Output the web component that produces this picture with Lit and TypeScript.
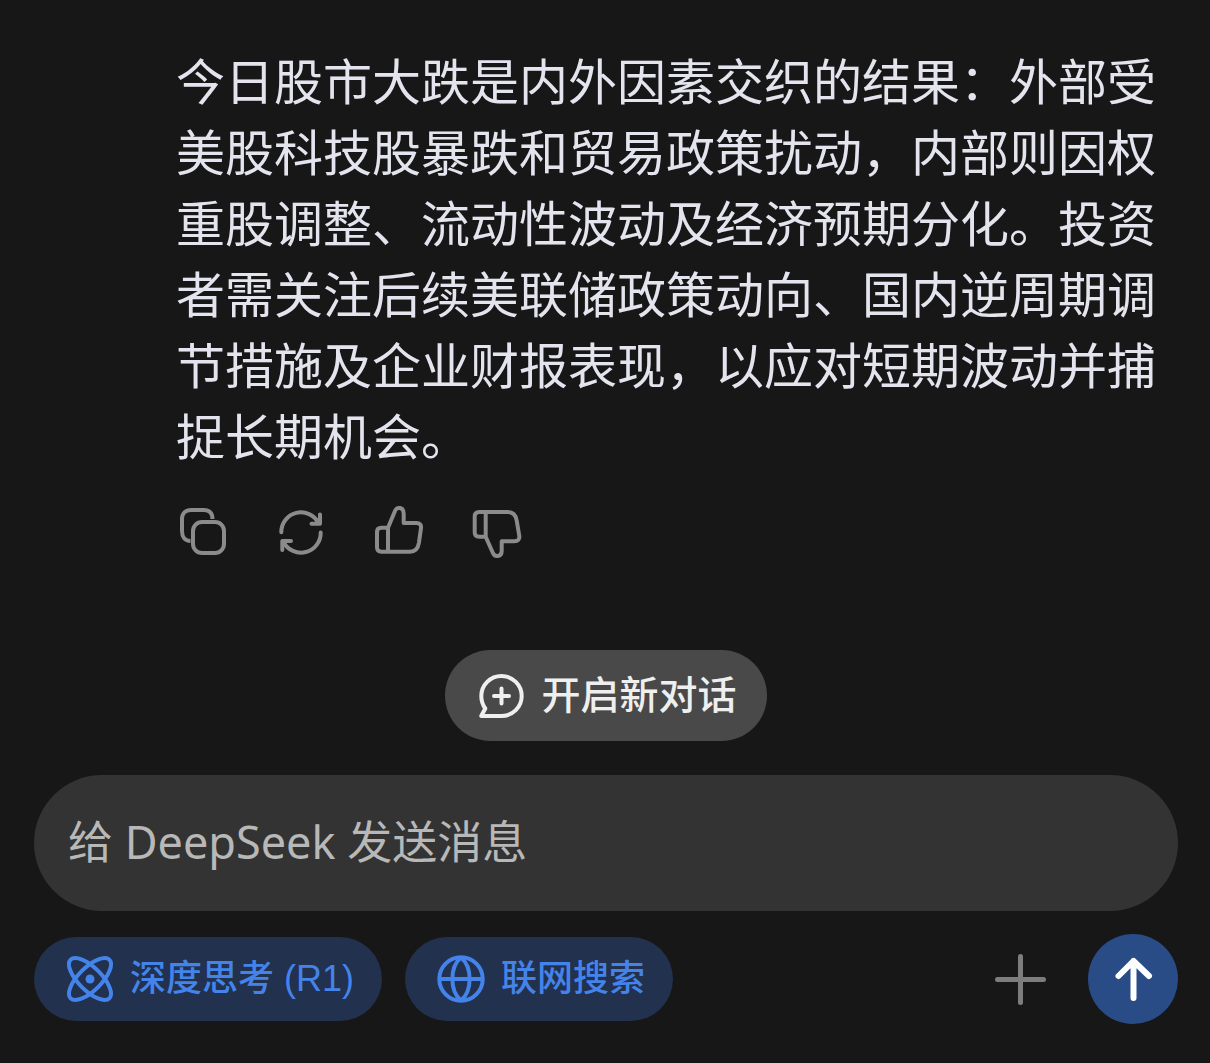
import { LitElement, html, css, svg } from "lit";
import { customElement, property, state } from "lit/decorators.js";

const icons = {
  copy: svg`<rect x="17" y="17" width="31" height="31" rx="9"/><path stroke-linecap="butt" d="M36.500 14C36.500 8 33 5 28 5H15C9.500 5 6 8.500 6 14v12c0 6 3 10 8.500 10"/>`,
  retry: svg`<path d="M7.300 27.300A19.700 19.700 0 0 1 44.500 18M46 9.500V18.700H37.500M46.700 27.500A19.700 19.700 0 0 1 9.500 37M8.300 45V36H17"/>`,
  like: svg`<path d="M16 22.700 23.200 5.500C25 1.500 31.700 2 31.700 8.500V18H44.500C47.800 18 49.400 20 49 23L46.900 38C46 43.500 43 46.700 38 46.700H9.500Q5 46.700 5 42V27Q5 22.700 9.500 22.700H16V46"/>`,
  dislike: svg`<path d="M15.700 31.700 22.900 48C24.700 52.500 31.700 52 31.700 46V36.300H44.500C47.800 36.300 49.700 34.500 49.300 31L46.700 15.500C45.700 10 43 7 38 7H9.200Q4.700 7 4.700 11.500V27.200Q4.700 31.700 9.200 31.700H15.700V8"/>`,
  chat: svg`<path d="M24.500 44H4.200L8.300 36.500C5.800 33 4.300 28.500 4.300 24A20.200 20 0 1 1 24.500 44Z"/><path d="M24.500 16.500V31.500M17 24H32"/>`,
  atom: svg`<g stroke-width="4"><ellipse cx="24" cy="24" rx="27.400" ry="11.500" transform="rotate(45 24 24)"/><ellipse cx="24" cy="24" rx="27.400" ry="11.500" transform="rotate(-45 24 24)"/></g><circle class="dot" cx="24" cy="24" r="4.500"/>`,
  globe: svg`<circle cx="24" cy="24" r="21.700"/><path d="M2.500 24H45.500M24 2.500C12.500 12 12.500 36 24 45.500M24 2.500C35.500 12 35.500 36 24 45.500"/>`,
};

@customElement("icon-button")
class IconButton extends LitElement {
  @property() label = "";
  @property() icon: keyof typeof icons = "copy";

  static styles = css`
    :host { display: block; }
    .action {
      display: block;
      padding: 0;
      border: 0;
      background: none;
      color: #8b8b8b;
      cursor: pointer;
    }
    .glyph {
      display: block;
      width: 54px;
      height: 54px;
      fill: none;
      stroke: currentColor;
      stroke-width: 4;
      stroke-linecap: round;
      stroke-linejoin: round;
    }
  `;

  render() {
    return html`<button class="action" type="button" aria-label=${this.label}>
      <svg class="glyph" viewBox="0 0 54 54" aria-hidden="true">${icons[this.icon]}</svg>
    </button>`;
  }
}

@customElement("toggle-chip")
class ToggleChip extends LitElement {
  @property() label = "";
  @property() icon: keyof typeof icons = "atom";
  @state() private on = true;

  static styles = css`
    :host { display: block; }
    .chip {
      display: flex;
      align-items: center;
      gap: 16px;
      height: 84px;
      padding: 0 28px 0 32px;
      border: 0;
      border-radius: 42px;
      background: #333333;
      color: #b8b8b8;
      font: 500 36px/48px "Liberation Sans", "Noto Sans CJK SC", sans-serif;
      white-space: nowrap;
      cursor: pointer;
    }
    .chip[aria-pressed="true"] {
      background: #21314e;
      color: #4484ea;
    }
    .glyph {
      width: 48px;
      height: 48px;
      fill: none;
      stroke: currentColor;
      stroke-width: 4;
      overflow: visible;
    }
    .dot { fill: currentColor; stroke: none; }
  `;

  render() {
    return html`<button class="chip" type="button" aria-pressed=${this.on ? "true" : "false"}
      @click=${() => (this.on = !this.on)}>
      <svg class="glyph" viewBox="0 0 48 48" aria-hidden="true">${icons[this.icon]}</svg>
      <span>${this.label}</span>
    </button>`;
  }
}

@customElement("app-root")
class AppRoot extends LitElement {
  static styles = css`
    :host {
      display: flex;
      flex-direction: column;
      box-sizing: border-box;
      min-height: 100vh;
      padding: 43px 32px 39px 34px;
      background: #171717;
      font-family: "Noto Sans", "Noto Sans CJK SC", sans-serif;
    }
    .message {
      flex: 1;
      padding: 0 14px 0 142px;
    }
    .text {
      margin: 0;
      color: #e4e4ee;
      font-family: "Noto Sans CJK SC", sans-serif;
      font-size: 49px;
      font-weight: 400;
      line-height: 71px;
    }
    .actions {
      display: flex;
      gap: 44px;
      margin-top: 36px;
    }
    .new-chat {
      display: flex;
      align-items: center;
      align-self: center;
      gap: 16px;
      height: 91px;
      margin-bottom: 34px;
      padding: 0 30px 0 32px;
      border: 0;
      border-radius: 46px;
      background: #494949;
      color: #efefef;
      font: 500 39px/52px "Liberation Sans", "Noto Sans CJK SC", sans-serif;
      cursor: pointer;
    }
    .chat-icon {
      width: 48px;
      height: 48px;
      fill: none;
      stroke: currentColor;
      stroke-width: 4;
      stroke-linecap: round;
      stroke-linejoin: round;
    }
    .field {
      box-sizing: border-box;
      width: 100%;
      height: 136px;
      padding: 0 34px 4px;
      border: 0;
      border-radius: 68px;
      outline: 0;
      background: #333333;
      color: #e4e4ee;
      font: 400 45px/60px "Noto Sans", "Noto Sans CJK SC", sans-serif;
    }
    .field::placeholder { color: #b8b8b8; opacity: 1; }
    .tools {
      display: flex;
      align-items: center;
      gap: 23px;
      margin-top: 23px;
    }
    .end {
      display: flex;
      align-items: center;
      gap: 40px;
      margin-left: auto;
    }
    .add, .send {
      display: block;
      padding: 0;
      border: 0;
      background: none;
      cursor: pointer;
    }
    .send {
      border-radius: 50%;
      background: #294c87;
    }
    .add-icon, .send-icon {
      display: block;
      fill: none;
      stroke: #7d7d7d;
      stroke-width: 5;
      stroke-linecap: round;
      stroke-linejoin: round;
    }
    .add-icon { width: 56px; height: 56px; }
    .send-icon {
      width: 90px;
      height: 90px;
      stroke: #ffffff;
      stroke-width: 6;
    }
  `;

  render() {
    return html`
      <article class="message">
        <p class="text">今日股市大跌是内外因素交织的结果：外部受美股科技股暴跌和贸易政策扰动，内部则因权重股调整、流动性波动及经济预期分化。投资者需关注后续美联储政策动向、国内逆周期调节措施及企业财报表现，以应对短期波动并捕捉长期机会。</p>
        <div class="actions">
          <icon-button icon="copy" label="复制"></icon-button>
          <icon-button icon="retry" label="重新生成"></icon-button>
          <icon-button icon="like" label="喜欢"></icon-button>
          <icon-button icon="dislike" label="不喜欢"></icon-button>
        </div>
      </article>
      <button class="new-chat" type="button">
        <svg class="chat-icon" viewBox="0 0 48 48" aria-hidden="true">${icons.chat}</svg>
        <span>开启新对话</span>
      </button>
      <input class="field" type="text" aria-label="给 DeepSeek 发送消息" placeholder="给 DeepSeek 发送消息">
      <div class="tools">
        <toggle-chip icon="atom" label="深度思考 (R1)"></toggle-chip>
        <toggle-chip icon="globe" label="联网搜索"></toggle-chip>
        <div class="end">
          <button class="add" type="button" aria-label="添加">
            <svg class="add-icon" viewBox="0 0 56 56" aria-hidden="true"><path d="M28.500 5.500V51.500M5.500 28.500H51.500"/></svg>
          </button>
          <button class="send" type="button" aria-label="发送">
            <svg class="send-icon" viewBox="0 0 90 90" aria-hidden="true"><path d="M45.500 27V64M30.500 42 45.500 27 61 42"/></svg>
          </button>
        </div>
      </div>
    `;
  }
}
